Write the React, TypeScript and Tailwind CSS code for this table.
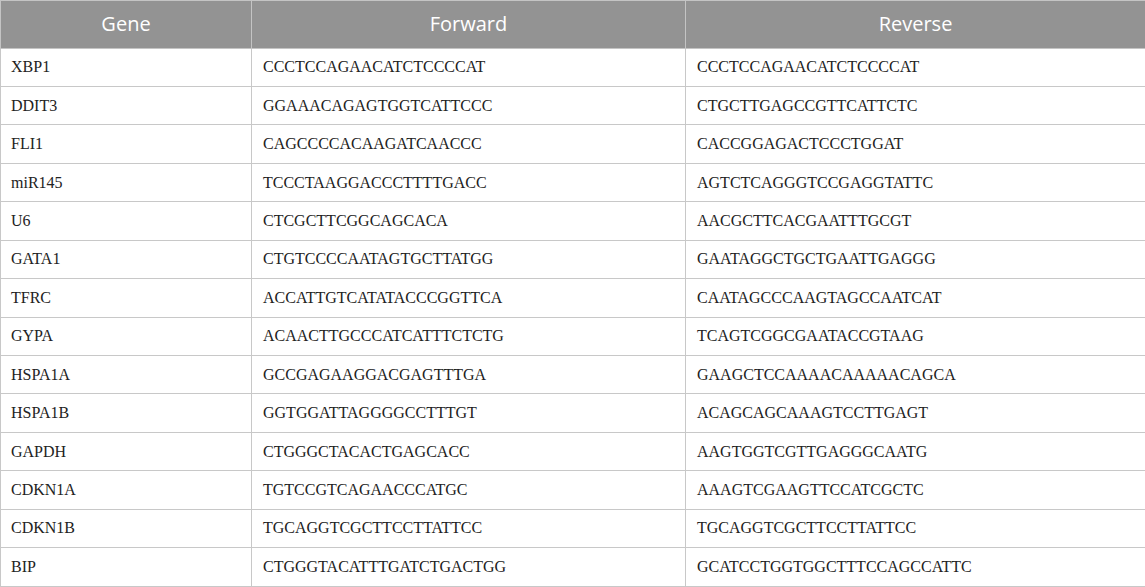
const rows: [string, string, string][] = [
  ['XBP1', 'CCCTCCAGAACATCTCCCCAT', 'CCCTCCAGAACATCTCCCCAT'],
  ['DDIT3', 'GGAAACAGAGTGGTCATTCCC', 'CTGCTTGAGCCGTTCATTCTC'],
  ['FLI1', 'CAGCCCCACAAGATCAACCC', 'CACCGGAGACTCCCTGGAT'],
  ['miR145', 'TCCCTAAGGACCCTTTTGACC', 'AGTCTCAGGGTCCGAGGTATTC'],
  ['U6', 'CTCGCTTCGGCAGCACA', 'AACGCTTCACGAATTTGCGT'],
  ['GATA1', 'CTGTCCCCAATAGTGCTTATGG', 'GAATAGGCTGCTGAATTGAGGG'],
  ['TFRC', 'ACCATTGTCATATACCCGGTTCA', 'CAATAGCCCAAGTAGCCAATCAT'],
  ['GYPA', 'ACAACTTGCCCATCATTTCTCTG', 'TCAGTCGGCGAATACCGTAAG'],
  ['HSPA1A', 'GCCGAGAAGGACGAGTTTGA', 'GAAGCTCCAAAACAAAAACAGCA'],
  ['HSPA1B', 'GGTGGATTAGGGGCCTTTGT', 'ACAGCAGCAAAGTCCTTGAGT'],
  ['GAPDH', 'CTGGGCTACACTGAGCACC', 'AAGTGGTCGTTGAGGGCAATG'],
  ['CDKN1A', 'TGTCCGTCAGAACCCATGC', 'AAAGTCGAAGTTCCATCGCTC'],
  ['CDKN1B', 'TGCAGGTCGCTTCCTTATTCC', 'TGCAGGTCGCTTCCTTATTCC'],
  ['BIP', 'CTGGGTACATTTGATCTGACTGG', 'GCATCCTGGTGGCTTTCCAGCCATTC'],
];

export default function App() {
  return (
    <div className="w-[1145px] h-[587px] bg-white overflow-hidden">
      <table className="w-[1145px] table-fixed border-collapse">
        <colgroup>
          <col className="w-[251px]" />
          <col className="w-[434px]" />
          <col className="w-[460px]" />
        </colgroup>
        <thead>
          <tr className="h-[47.5px] bg-[#939393] text-white font-['Open_Sans',sans-serif] text-[20px]">
            {['Gene', 'Forward', 'Reverse'].map((h) => (
              <th key={h} className="font-normal text-center border border-[#c4c4c4] p-0">
                {h}
              </th>
            ))}
          </tr>
        </thead>
        <tbody className="font-['Liberation_Serif',serif] text-[16px] text-[#222]">
          {rows.map(([gene, fwd, rev]) => (
            <tr key={gene} className="h-[38.45px]">
              <td className="border border-[#c8c8c8] pl-[10px] py-0">{gene}</td>
              <td className="border border-[#c8c8c8] pl-[11px] py-0">{fwd}</td>
              <td className="border border-[#c8c8c8] pl-[11px] py-0">{rev}</td>
            </tr>
          ))}
        </tbody>
      </table>
    </div>
  );
}
